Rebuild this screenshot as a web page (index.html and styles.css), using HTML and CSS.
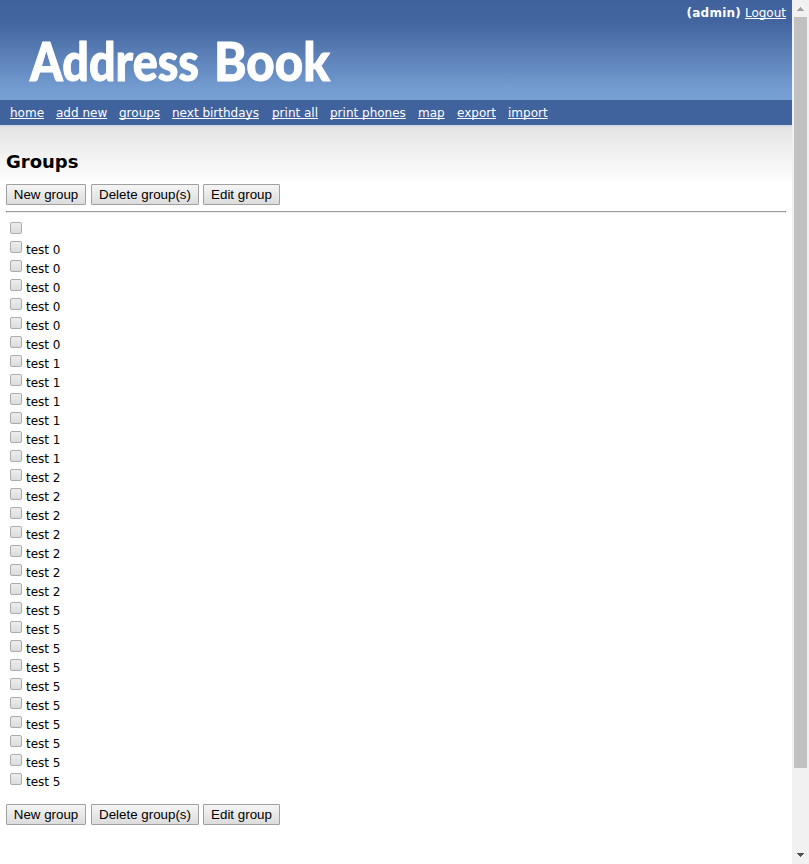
FILE: index.html
```html
<!DOCTYPE html>
<html lang="en">
<head>
<meta charset="utf-8">
<title>Address Book</title>
<link rel="stylesheet" href="styles.css">
</head>
<body>
<div class="page">
  <header class="header">
    <div class="account"><b>(admin)</b> <a href="#">Logout</a></div>
    <svg class="logo" width="330" height="69" role="img" aria-label="Address Book">
      <text y="50" x="30" textLength="169" lengthAdjust="spacingAndGlyphs">Address</text>
      <text y="50" x="214" textLength="116" lengthAdjust="spacingAndGlyphs">Book</text>
    </svg>
  </header>
  <nav class="nav">
    <a href="#" style="width:34px">home</a>
    <a href="#" style="width:51px">add new</a>
    <a href="#" style="width:41px">groups</a>
    <a href="#" style="width:88px">next birthdays</a>
    <a href="#" style="width:46px">print all</a>
    <a href="#" style="width:76px">print phones</a>
    <a href="#" style="width:27px">map</a>
    <a href="#" style="width:39px">export</a>
    <a href="#" style="width:40px">import</a>
  </nav>
  <main class="content">
    <h1>Groups</h1>
    <div class="actions"><button class="new">New group</button><button class="delete">Delete group(s)</button><button class="edit">Edit group</button></div>
    <hr>
    <div class="groups" id="groups"></div>
    <div class="actions"><button class="new">New group</button><button class="delete">Delete group(s)</button><button class="edit">Edit group</button></div>
  </main>
</div>
<aside class="scrollbar">
  <svg width="17" height="17" shape-rendering="crispEdges"><path d="M5 11h7L8.500 7z" fill="#a3a3a3"/></svg>
  <div class="thumb"></div>
  <svg class="down" width="17" height="17" shape-rendering="crispEdges"><path d="M5 6h7L8.500 10z" fill="#505050"/></svg>
</aside>
<script src="groups.js"></script>
</body>
</html>
```
FILE: styles.css
```css
* { box-sizing: border-box; }
body {
  margin: 0;
  height: 864px;
  overflow: hidden;
  display: grid;
  grid-template-columns: 792px 17px;
  font: 12px Verdana, "DejaVu Sans", sans-serif;
  color: #000;
  background: #fff;
}
.header {
  height: 100px;
  background: linear-gradient(#40629d 0, #42659f 22px, #769fd3 92px, #769fd3 100px);
  color: #fff;
}
.header a, .nav a { color: #fff; text-underline-offset: 1px; text-decoration-skip-ink: none; }
.account {
  height: 31px;
  padding: 5px 6px 0 0;
  text-align: right;
  line-height: 16px;
}
.account b { letter-spacing: 0.25px; }
.logo { display: block; overflow: visible; }
.logo text { font: 900 54px Lato, sans-serif; fill: #fff; stroke: #fff; stroke-width: 1px; stroke-linejoin: round; }
.nav {
  display: flex;
  gap: 12px;
  height: 25px;
  padding: 5px 0 0 10px;
  background: #40629d;
  line-height: 16px;
}
.nav a { white-space: nowrap; }
.content {
  height: 739px;
  padding: 24px 6px 0;
  border-top: 2px solid #d6dae2;
  background: linear-gradient(#e4e4e4, #fff 57px);
}
h1 { margin: 0 0 11px; font-size: 18px; line-height: 22px; }
.actions { display: flex; height: 21px; }
button {
  height: 21px;
  padding: 0;
  border: 1px solid #a0a0a0;
  border-radius: 1px;
  background: linear-gradient(#f5f5f5, #dcdcdc);
  color: #000;
  font: 13.333px "Liberation Sans", Arial, sans-serif;
  white-space: nowrap;
}
.new { width: 80px; margin-right: 5px; }
.delete { width: 108px; margin-right: 4px; }
.edit { width: 77px; }
hr { margin: 6px 0 8px; height: 2px; border: 1px solid #9a9a9a; border-bottom-color: #eee; }
.groups { height: 583px; padding-top: 1px; }
.group { display: flex; height: 19px; padding-left: 4px; line-height: 19px; }
.group input {
  appearance: none;
  width: 12px;
  height: 12px;
  margin: 0 4px 0 0;
  border: 1px solid #acacac;
  border-radius: 2px;
  background: linear-gradient(#ededed, #dcdcdc);
}
.scrollbar { background: #f1f1f1; height: 864px; display: flex; flex-direction: column; }
.scrollbar svg { display: block; }
.thumb { width: 13px; height: 751px; margin-left: 2px; background: #c1c1c1; }
.down { margin-top: auto; }
```
FILE: groups.js
```js
const names = [
  "",
  ...Array(6).fill("test 0"),
  ...Array(6).fill("test 1"),
  ...Array(7).fill("test 2"),
  ...Array(10).fill("test 5")
];
const list = document.getElementById("groups");
for (const name of names) {
  const row = document.createElement("label");
  row.className = "group";
  const box = document.createElement("input");
  box.type = "checkbox";
  row.append(box, name);
  list.append(row);
}
```
